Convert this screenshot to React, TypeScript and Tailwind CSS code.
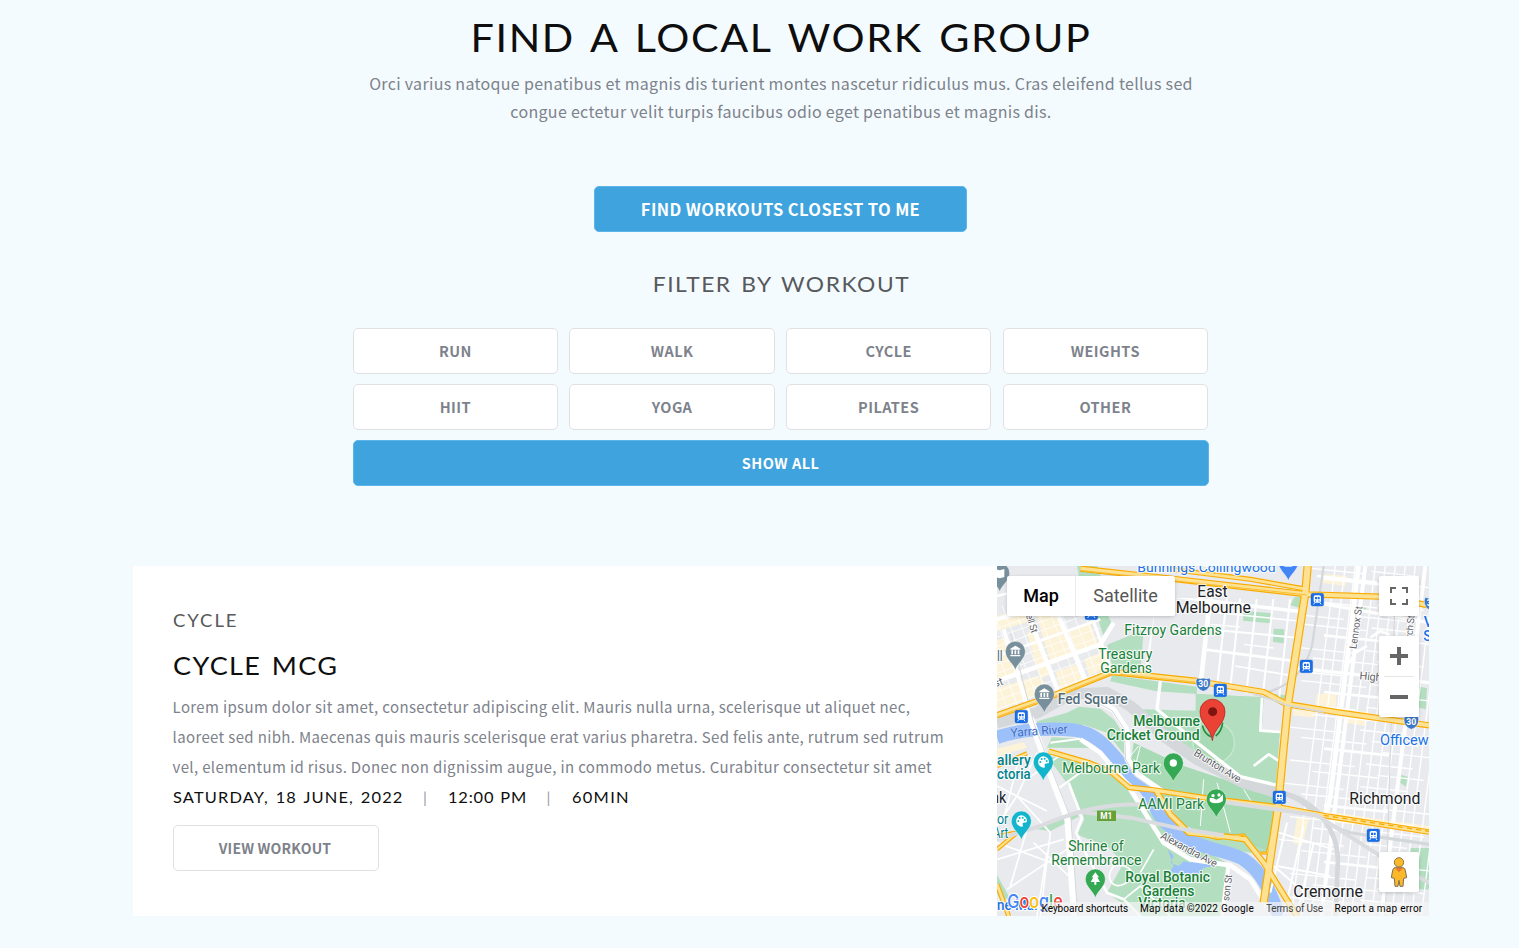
import React from "react";

const HEAD = "font-['Lato','Liberation_Sans',sans-serif] whitespace-nowrap";
const BODY = "font-['Noto_Sans_CJK_SC',sans-serif]";

type P = { d: string; w: number };

/* ---------- map data (units: thirds of a pixel) ---------- */
const parks = [
  "M240 0H300L312 32H246Z",
  "M300 150H334L348 180L320 212Z",
  "M330 236L440 192L430 322L350 318Z",
  "M345 328L600 362L600 384L478 376L340 346Z",
  "M120 466L210 440L246 422L310 428L352 462L382 510L386 590L408 620L470 672L834 722L836 668L772 640L560 540L430 430L596 434L600 384L800 394L794 494L848 500L820 862L770 862L620 840L520 700L440 640L330 500L260 476L120 490Z",
  "M596 384L800 394L794 494L848 500L836 664L740 640L620 590L500 520L420 440L596 450Z",
  "M800 380L868 388L862 420L830 402Z",
  "M164 514L252 518L300 546L150 545Z",
  "M150 570L300 590L380 650L440 720L520 800L690 890L670 1050H430L330 980L380 890L330 840L240 806L262 760L216 660Z",
  "M740 134L824 142L820 172L738 164Z",
  "M830 188L862 190L860 232L828 228Z",
  "M892 94L914 92L910 126L880 118Z",
  "M1266 362L1290 366L1286 430L1262 424Z",
  "M1092 122H1110L1106 136H1092Z",
  "M1210 626L1232 632L1226 662L1210 650Z",
  "M1240 846H1296V970H1240Z",
  "M0 926L40 1000H20L0 985Z",
  "M120 790L240 740L245 752L160 795Z",
];
const shops = [
  "M0 150L80 130L100 165L0 196Z",
  "M120 150H186L200 200L140 225Z",
  "M0 222L26 214L60 330L0 345Z",
  "M90 200L118 194L170 320L130 340Z",
  "M0 366L120 330L165 370L0 436Z",
  "M140 225L200 200L226 270L164 296Z",
  "M214 196L280 172L304 236L240 262Z",
  "M176 318L236 296L262 340L190 368Z",
  "M262 280L320 256L336 300L276 330Z",
  "M0 548L80 528L90 545L0 572Z",
  "M960 385L1020 380L1015 425L955 415Z",
  "M900 750L935 760L915 840L888 830Z",
  "M980 735L1296 780V800L975 765Z",
  "M985 25L1050 30L1045 60L975 50Z",
  "M890 425L960 430L950 455L888 448Z",
  "M1060 430L1120 440L1100 480L1050 470Z",
];

const eastV: P[] = [];
for (let i = 0; i < 18; i++) {
  const x = 975 + i * 30;
  eastV.push({ d: `M${x + 40} 0L${x - 92} 1050`, w: i % 6 === 3 ? 12 : 4 });
}
const eastH: P[] = [];
for (let i = 0; i < 33; i++) {
  const y = -30 + i * 34;
  const off = ((i * 67) % 5) * 34;
  eastH.push({ d: `M${845 + off} ${y}L${1040 + off} ${y + 20}`, w: i % 5 === 2 ? 8 : 4 });
  eastH.push({ d: `M${1090 + off / 2} ${y + 12}L${1230 + off / 2} ${y + 27}`, w: 4 });
}
const northV = [470, 545, 640, 690, 730, 780, 830, 880].map((x, i) => ({
  d: `M${x} 90L${x - 34} 400`,
  w: i === 2 ? 14 : i === 0 ? 16 : 6,
})).filter((_, i) => i !== 1);
const northH = [
  { d: "M535 92L920 138", w: 10 },
  { d: "M640 138L905 165", w: 5 },
  { d: "M630 190L900 215", w: 6 },
  { d: "M620 250L890 285", w: 8 },
  { d: "M715 300L890 330", w: 5 },
  { d: "M640 175L730 183", w: 4 },
  { d: "M740 235L830 246", w: 4 },
];
const cbdMinor: string[] = [];
for (let i = 0; i < 15; i++) cbdMinor.push(`M0 ${160 + i * 27}L340 ${40 + i * 27}`);
for (let i = 0; i < 14; i++) cbdMinor.push(`M${-120 + i * 34} 120L${5 + i * 34} 450`);

const whites: P[] = [
  { d: "M0 345L310 235L350 170", w: 14 },
  { d: "M0 270L310 160", w: 8 },
  { d: "M95 150L182 372", w: 14 },
  { d: "M185 150L266 345", w: 14 },
  { d: "M280 140L345 320", w: 9 },
  { d: "M20 190L102 460", w: 12 },
  { d: "M0 160L80 138", w: 12 },
  { d: "M100 455L140 570L212 760L232 1050", w: 20 },
  { d: "M0 660L150 735M0 780L60 690L120 560M60 690L160 800L130 1050M0 880L200 820M30 970L210 850M60 600L20 760M110 830L215 930M90 790L40 960M0 830L190 900M150 860L120 1050M200 560L90 640L0 620", w: 5 },
  { d: "M215 650L255 755L238 800L260 850L330 980L380 1000L430 1050", w: 8 },
  { d: "M180 670L250 620L300 602", w: 6 },
  { d: "M250 520L310 560L390 655L500 830L580 880L700 898L760 940L810 1020", w: 14 },
  { d: "M308 410L350 432L388 490L392 580L420 625L500 680", w: 18 },
  { d: "M160 530L250 518", w: 6 },
  { d: "M490 345L480 430L600 530L730 632L850 660", w: 10 },
  { d: "M425 540L400 570M430 540L410 620L450 640M620 640L610 780M660 650L700 800M740 670L765 710M410 580L440 610", w: 3 },
  { d: "M770 600L815 565L850 588L845 620M795 395L790 494L850 498", w: 8 },
  { d: "M350 900C320 940 350 970 380 955C430 930 400 890 350 900M430 920L470 850M380 1000L430 960L520 1050", w: 5 },
  { d: "M695 890L675 1050", w: 12 },
  { d: "M1085 0L1000 690L985 760", w: 14 },
  { d: "M960 110L1296 170", w: 10 },
  { d: "M890 305L1296 350", w: 10 },
  { d: "M830 900L900 960M845 800L1010 850M840 900L1000 930M870 770L820 980M920 780L860 1050M950 830L900 1050", w: 6 },
];
const rails: P[] = [
  { d: "M0 470L120 440L220 385L330 380L400 420L500 510L600 580L740 650L840 680", w: 34 },
  { d: "M230 378L330 370L420 420L560 540", w: 8 },
  { d: "M850 680C960 700 1030 800 1022 900L1015 1050", w: 14 },
  { d: "M840 678C940 700 970 780 1060 800L1296 835", w: 10 },
  { d: "M980 0L945 240C920 330 860 370 790 384", w: 7 },
];
const yellows: P[] = [
  { d: "M250 8L540 40L930 85L1150 92L1296 118", w: 18 },
  { d: "M520 10L760 40L930 70", w: 14 },
  { d: "M932 0L925 80L872 420L842 730L800 1010", w: 24 },
  { d: "M0 448L170 388L345 318L600 345L800 378L868 414L1030 440L1296 478", w: 18 },
  { d: "M155 556L280 592L345 620L396 664L470 672L640 698L840 722L1000 752L1296 798", w: 16 },
  { d: "M478 675L520 745L575 800L690 812L745 820L800 890L900 1050", w: 18 },
  { d: "M590 800L660 818L740 806L780 860L810 862L822 820", w: 8 },
  { d: "M0 600L90 562M0 810L60 800L0 850", w: 12 },
  { d: "M0 955L35 1050", w: 14 },
];

const Lines = ({ items, color, extra = 0 }: { items: P[]; color: string; extra?: number }) => (
  <g fill="none" stroke={color} strokeLinejoin="round">
    {items.map((p, i) => (
      <path key={i} d={p.d} strokeWidth={p.w + extra} />
    ))}
  </g>
);

const Station = ({ x, y }: { x: number; y: number }) => (
  <g transform={`translate(${x} ${y})`}>
    <rect x="-19" y="-19" width="38" height="38" rx="5" fill="#1a6fe8" stroke="#1558c0" />
    <rect x="-11" y="-13" width="22" height="22" rx="5" fill="#fff" />
    <path d="M-7 -8H-1V-1H-7ZM1 -8H7V-1H1Z" fill="#1a6fe8" />
    <circle cx="-5" cy="4" r="2" fill="#1a6fe8" />
    <circle cx="5" cy="4" r="2" fill="#1a6fe8" />
    <path d="M-8 9L-11 14M8 9L11 14" stroke="#fff" strokeWidth="3" />
  </g>
);

const Pin = ({ x, y, color, children }: { x: number; y: number; color: string; children?: React.ReactNode }) => (
  <g transform={`translate(${x} ${y})`}>
    <path
      d="M0 57C-4 38 -30 24 -30 0A30 30 0 0 1 30 0C30 24 4 38 0 57Z"
      fill={color}
      stroke="#fff"
      strokeOpacity=".6"
      strokeWidth="2"
    />
    {children}
  </g>
);

const Museum = () => (
  <path d="M-15 -8L0 -17L15 -8V-5H-15ZM-12 -3H-7V9H-12ZM-2.500 -3H2.500V9H-2.500ZM7 -3H12V9H7ZM-15 11H15V15H-15Z" fill="#fff" />
);
const Palette = ({ color }: { color: string }) => (
  <g>
    <path d="M0 -17A17 17 0 1 0 3 17C8 15 0 8 6 5C12 3 17 6 17 -1A17 16 0 0 0 0 -17Z" fill="#fff" />
    <circle cx="-9" cy="0" r="3" fill={color} />
    <circle cx="-5" cy="-9" r="3" fill={color} />
    <circle cx="4" cy="-10" r="3" fill={color} />
    <circle cx="10" cy="-3" r="3" fill={color} />
  </g>
);

const Shield = ({ x, y, label }: { x: number; y: number; label: string }) => (
  <g transform={`translate(${x} ${y})`}>
    <path d="M-19 -18Q-10 -13 0 -18Q10 -13 19 -18L22 -10Q24 14 0 22Q-24 14 -22 -10Z" fill="#3b78c9" stroke="#fff" strokeWidth="1.500" />
    <text x="0" y="9" textAnchor="middle" fontSize="26" fontWeight="700" fill="#fff">{label}</text>
  </g>
);

type L = { t: string; x: number; y: number; w: number; s?: number; c?: string; b?: number };
const green = "#188038";
const labels: L[] = [
  { t: "Bunnings Collingwood", x: 421, y: 19, w: 415, c: "#1a73e8", s: 40 },
  { t: "East", x: 601, y: 93, w: 91, c: "#202124", s: 47 },
  { t: "Melbourne", x: 536, y: 140, w: 226, c: "#202124", s: 47 },
  { t: "Fitzroy Gardens", x: 382, y: 207, w: 292 },
  { t: "Treasury", x: 304, y: 280, w: 162 },
  { t: "Gardens", x: 310, y: 321, w: 155 },
  { t: "Fed Square", x: 182, y: 414, w: 210, c: "#546e7a", b: 500 },
  { t: "Melbourne", x: 409, y: 480, w: 200, b: 500 },
  { t: "Cricket Ground", x: 329, y: 522, w: 279, b: 500 },
  { t: "Melbourne Park", x: 196, y: 621, w: 293 },
  { t: "AAMI Park", x: 424, y: 729, w: 197 },
  { t: "Shrine of", x: 214, y: 854, w: 166 },
  { t: "Remembrance", x: 163, y: 897, w: 270 },
  { t: "Royal Botanic", x: 385, y: 948, w: 254, b: 500 },
  { t: "Gardens", x: 436, y: 990, w: 156, b: 500 },
  { t: "Victoria", x: 424, y: 1027, w: 142, b: 500 },
  { t: "Richmond", x: 1057, y: 715, w: 213, c: "#202124", s: 47 },
  { t: "Cremorne", x: 889, y: 994, w: 209, c: "#202124", s: 47 },
  { t: "allery", x: 0, y: 598, w: 101, c: "#00838f", b: 500 },
  { t: "ctoria", x: 0, y: 639, w: 101, c: "#00838f", b: 500 },
  { t: "or", x: 0, y: 774, w: 34, c: "#00838f" },
  { t: "Art", x: -12, y: 816, w: 46, c: "#00838f" },
  { t: "nk", x: -18, y: 711, w: 46, c: "#202124", s: 47 },
  { t: "ll", x: 0, y: 285, w: 17, c: "#546e7a" },
  { t: "Officew", x: 1149, y: 537, w: 146, c: "#1a73e8" },
  { t: "V", x: 1280, y: 184, w: 28, c: "#1a73e8", b: 500 },
  { t: "S", x: 1279, y: 225, w: 25, c: "#1a73e8", b: 500 },
  { t: "ne Ma.", x: 0, y: 1032, w: 122, c: "#1a73e8", b: 500 },
];

const MapArt = () => (
  <svg viewBox="0 0 1296 1050" className="block h-[350px] w-[432px] font-['Roboto',sans-serif]">
    <defs>
      <clipPath id="east"><path d="M945 0H1296V1050H890L800 900L880 420Z" /></clipPath>
      <clipPath id="north"><path d="M480 95L922 100L875 400L478 345L440 330Z" /></clipPath>
      <clipPath id="cbd"><path d="M0 120H290L340 318L170 380L0 440Z" /></clipPath>
    </defs>
    <rect width="1296" height="1050" fill="#e8eaed" />
    {shops.map((d) => <path key={d} d={d} fill="#fdf3d8" />)}
    {parks.map((d) => <path key={d} d={d} fill="#b3dfc0" />)}
    <path d="M410 530L560 600L740 660L830 690L830 860L690 810L560 780L470 660L400 600Z" fill="#a8dab5" />
    <circle cx="650" cy="530" r="62" fill="#a8dab5" stroke="#c6ead0" strokeWidth="4" />
    <g clipPath="url(#cbd)" fill="none" stroke="#fff" strokeWidth="3" strokeOpacity=".8">
      {cbdMinor.map((d) => <path key={d} d={d} />)}
    </g>
    <g clipPath="url(#east)"><Lines items={[...eastV, ...eastH]} color="#fff" /></g>
    <g clipPath="url(#north)"><Lines items={[...northV, ...northH]} color="#fff" /></g>
    <path d="M1120 215L1150 195L1178 206M1050 300L1075 260L1110 240M300 30L350 150M960 30L1140 50M0 90L80 70" fill="none" stroke="#fff" strokeWidth="8" />
    <path d="M0 514C70 490 150 486 230 492C330 505 350 590 420 642C480 690 460 740 530 790C590 850 690 850 740 880C800 920 820 980 850 1060" fill="none" stroke="#9cc0f9" strokeWidth="40" />
    <path d="M512 850L530 870L520 890L545 900L560 885L580 890L600 870L640 880L650 900L620 905L600 930L570 920L545 928L520 915L530 900Z" fill="#9cc0f9" />
    <Lines items={rails} color="#d5d8db" />
    <Lines items={whites} color="#fff" />
    <path d="M40 200L110 470L150 575L222 760L242 1050M1195 60L1165 1050" fill="none" stroke="#d5d8db" strokeWidth="3" />
    <path d="M300 410L345 434L382 490L386 580L414 630L496 686" fill="none" stroke="#bdc1c6" strokeWidth="2" />
    <Lines items={yellows} color="#f9ab00" extra={1} />
    <Lines items={yellows} color="#fde293" extra={-6} />
    <path d="M250 13L540 45L930 87M0 452L170 392L345 322L600 349" fill="none" stroke="#f9ab00" strokeWidth="2" />
    <path d="M980 748L1296 796" stroke="#f9ab00" strokeWidth="4" strokeDasharray="16 12" />
    <path d="M0 820L130 780C250 730 330 712 450 715M250 738L400 755L560 790L680 808M660 705L960 748L1150 870L1296 950" fill="none" stroke="#dadce0" strokeWidth="12" />
    <path d="M770 384L830 402L870 418L980 438" stroke="#d8d8d4" strokeWidth="6" fill="none" />

    <Station x={283} y={142} />
    <Station x={73} y={452} />
    <Station x={961} y={101} />
    <Station x={928} y={301} />
    <Station x={670} y={373} />
    <Station x={847} y={694} />
    <Station x={1129} y={808} />
    <Shield x={619} y={354} label="30" />
    <Shield x={1243} y={468} label="30" />
    <Shield x={1304} y={112} label="30" />
    <rect x="300" y="734" width="57" height="31" fill="#689f38" />
    <text x="328" y="759" textAnchor="middle" fontSize="25" fontWeight="700" fill="#fff">M1</text>

    <g fontSize="33" fill="#5f6368" stroke="#fff" strokeWidth="5" strokeLinejoin="round" className="[paint-order:stroke]">
      <text transform="translate(41 513) rotate(-4)" fontSize="36" fill="#3f6ec6" strokeOpacity=".2" textLength="172" lengthAdjust="spacingAndGlyphs">Yarra River</text>
      <text transform="translate(588 566) rotate(32)" textLength="160" fontSize="32">Brunton Ave</text>
      <text transform="translate(488 816) rotate(28)" textLength="188" fontSize="32">Alexandra Ave</text>
      <text transform="translate(1078 250) rotate(-82)" textLength="130" fontSize="30">Lennox St</text>
      <text transform="translate(1246 216) rotate(-84)" textLength="68" fontSize="30">rch St</text>
      <text transform="translate(86 148) rotate(72)" textLength="58" fontSize="30">ell St</text>
      <text transform="translate(696 1006) rotate(-83)" textLength="80" fontSize="30">son St</text>
      <text x="1087" y="340" textLength="66" transform="rotate(5 1087 340)">High</text>
      <text x="-6" y="362" transform="rotate(-20 0 362)">st</text>
    </g>

    <path d="M616 478Q622 504 642 512M656 510Q674 496 677 470" fill="none" stroke="#1e8e3e" strokeWidth="5" />
    <g strokeLinejoin="round" className="[paint-order:stroke]">
      {labels.map((l, i) => (
        <text
          key={i}
          x={l.x}
          y={l.y}
          textLength={l.w}
          lengthAdjust="spacingAndGlyphs"
          fontSize={l.s ?? 42}
          fontWeight={l.b ?? 400}
          fill={l.c ?? green}
          stroke="#fff"
          strokeWidth="7"
          strokeOpacity=".75"
        >
          {l.t}
        </text>
      ))}
    </g>
    <Pin x={55} y={256} color="#78909c"><Museum /></Pin>
    <Pin x={142} y={384} color="#78909c"><Museum /></Pin>
    <Pin x={8} y={21} color="#78909c"><path d="M-14 -12L0 -8L14 -12V12L0 16L-14 12Z" fill="#fff" /></Pin>
    <Pin x={139} y={588} color="#12b5cb"><Palette color="#12b5cb" /></Pin>
    <Pin x={73} y={765} color="#12b5cb"><Palette color="#12b5cb" /></Pin>
    <Pin x={529} y={591} color="#34a853"><circle r="11" fill="#fff" /></Pin>
    <Pin x={658} y={699} color="#34a853">
      <path d="M-20 -4L-8 -2L0 2L10 -4L20 -14V6Q10 14 0 12Q-16 14 -20 6Z" fill="#fff" />
      <circle cx="-10" cy="-10" r="5" fill="#fff" /><circle cx="8" cy="-12" r="5" fill="#fff" />
    </Pin>
    <Pin x={295} y={939} color="#34a853"><path d="M0 -20L11 -5H6L14 9H3V17H-3V9H-14L-6 -5H-11Z" fill="#fff" /></Pin>
    <Pin x={874} y={-12} color="#4285f4"><path d="M-12 -4H12V14H-12Z" fill="#fff" /></Pin>

    <path d="M646 524C642 486 609 474 609 437A37.500 37.500 0 0 1 684 437C684 474 651 486 646 524Z" fill="#ea4335" stroke="#b31412" strokeWidth="2" />
    <circle cx="647" cy="437" r="13.500" fill="#811411" />

    <text x="31" y="1026" fontSize="57" fontWeight="500" textLength="166" lengthAdjust="spacingAndGlyphs" stroke="#fff" strokeWidth="6" className="font-['Inter',sans-serif] [paint-order:stroke]">
      <tspan fill="#4285f4">G</tspan><tspan fill="#ea4335">o</tspan><tspan fill="#fbbc04">o</tspan><tspan fill="#4285f4">g</tspan><tspan fill="#34a853">l</tspan><tspan fill="#ea4335">e</tspan>
    </text>
  </svg>
);

const control = "absolute flex items-center justify-center rounded-[2px] bg-white shadow-[0_1px_4px_-1px_rgba(0,0,0,0.3)]";

const MapPanel = () => (
  <div className="relative h-[350px] w-[432px] overflow-hidden font-['Roboto',sans-serif]">
    <MapArt />
    <div className={`${control} left-[10px] top-[10px] h-10 text-[18px]`}>
      <span className="mt-[-2px] w-[68px] text-center font-medium text-black">Map</span>
      <span className="flex h-10 w-[100px] items-center justify-center border-l border-[#ececec] pb-[2px] text-[#565656]">Satellite</span>
    </div>
    <div className={`${control} left-[382px] top-[10px] size-10`}>
      <svg viewBox="0 0 18 18" className="size-[18px]" fill="#666"><path d="M0 0v6h2V2h4V0H0zm16 0h-4v2h4v4h2V0h-2zm0 16h-4v2h6v-6h-2v4zM2 12H0v6h6v-2H2v-4z" /></svg>
    </div>
    <div className={`${control} left-[382px] top-[70px] h-[81px] w-10 flex-col`}>
      <svg viewBox="0 0 18 18" className="my-[11px] size-[18px]" fill="#666"><path d="M18 7h-7V0H7v7H0v4h7v7h4v-7h7z" /></svg>
      <span className="h-px w-[30px] bg-[#e6e6e6]" />
      <svg viewBox="0 0 18 18" className="my-[11px] size-[18px]" fill="#666"><path d="M0 7h18v4H0z" /></svg>
    </div>
    <div className={`${control} left-[382px] top-[286px] size-10`}>
      <svg viewBox="0 0 54 90" className="mr-px h-[30px] w-[18px]">
        <path d="M16 31H38Q46 33 47 45L50 62L41 64L39 88H30L27 70L24 88H15L13 64L4 62L7 45Q8 33 16 31Z" fill="#fbb829" stroke="#7d6f55" strokeWidth="3" />
        <circle cx="27" cy="16" r="14" fill="#fbb829" stroke="#8d784a" strokeWidth="3" />
        <path d="M14 32L27 46L40 32Z" fill="#e57b30" />
      </svg>
    </div>
    <div className="absolute bottom-0 right-0 flex h-[14px] items-center whitespace-nowrap bg-[#f5f5f5]/70 text-[10px] leading-[14px] text-black">
      <span className="w-[98.5px]">Keyboard shortcuts</span>
      <span className="w-[126px] tracking-[0.24px]">Map data ©2022 Google</span>
      <span className="w-[68.5px] tracking-[-0.2px] text-[#444]">Terms of Use</span>
      <span className="w-[94.5px] tracking-[0.25px]">Report a map error</span>
    </div>
  </div>
);

const filters = ["RUN", "WALK", "CYCLE", "WEIGHTS", "HIIT", "YOGA", "PILATES", "OTHER"];

export default function App() {
  return (
    <div className={`min-h-[948px] bg-[#f4fbff] pl-[43px] ${BODY}`}>
      <header className="flex flex-col items-center pt-[9px]">
        <h1 className={`h-[56px] scale-x-[1.06] text-[39px] leading-[56px] tracking-[1.55px] text-[#0e0e0e] [word-spacing:4px] ${HEAD}`}>FIND A LOCAL WORK GROUP</h1>
        <p className="mt-[4px] text-center text-[16px] leading-[28px] tracking-[0.31px] text-[#7d828b]">
          Orci varius natoque penatibus et magnis dis turient montes nascetur ridiculus mus. Cras eleifend tellus sed<br />
          congue ectetur velit turpis faucibus odio eget penatibus et magnis dis.
        </p>
        <button className="mr-px mt-[61px] h-[46px] w-[373px] rounded-[5px] border border-[#5bb5ea] bg-[#3fa3de] text-[16.5px] font-bold tracking-[0.38px] text-white">FIND WORKOUTS CLOSEST TO ME</button>
        <h2 className={`mt-[36px] h-[32px] scale-x-[1.06] text-[21.5px] leading-[32px] tracking-[1.45px] text-[#58595b] [word-spacing:2px] ${HEAD}`}>FILTER BY WORKOUT</h2>
      </header>
      <div className="ml-[309.6px] mt-[28px] grid w-[856px] grid-cols-[repeat(4,205.6px)] gap-x-[11.05px] gap-y-[10px]">
        {filters.map((f) => (
          <button key={f} className="h-[46px] rounded-[5px] border border-[#dfe1e3] bg-white text-[14.5px] font-bold tracking-[0.45px] text-[#7d828b]">{f}</button>
        ))}
        <button className="col-span-4 h-[46px] w-[856px] rounded-[5px] border border-[#5bb5ea] bg-[#3fa3de] text-[14.5px] font-bold tracking-[0.5px] text-white">SHOW ALL</button>
      </div>
      <article className="mx-auto mt-[80px] flex h-[350px] w-[1296px] bg-white">
        <div className="flex w-[864px] flex-col items-start px-[40px] pt-[41px]">
          <h4 className={`h-[28px] origin-left scale-x-[1.06] text-[17.5px] leading-[28px] tracking-[1.8px] text-[#58595b] ${HEAD}`}>CYCLE</h4>
          <h3 className={`mt-[10px] h-[40px] origin-left scale-x-[1.06] text-[25.5px] leading-[40px] tracking-[1.3px] text-[#0e0e0e] [word-spacing:2px] ${HEAD}`}>CYCLE MCG</h3>
          <p className="-ml-[0.4px] mt-[7px] whitespace-nowrap text-[15px] leading-[30px] tracking-[0.35px] text-[#7d828b]">
            Lorem ipsum dolor sit amet, consectetur adipiscing elit. Mauris nulla urna, scelerisque ut aliquet nec,<br />
            laoreet sed nibh. Maecenas quis mauris scelerisque erat varius pharetra. Sed felis ante, rutrum sed rutrum<br />
            vel, elementum id risus. Donec non dignissim augue, in commodo metus. Curabitur consectetur sit amet
          </p>
          <div className={`mt-px flex h-[30px] items-center text-[15.5px] text-[#0e0e0e] ${HEAD}`}>
            <span className="w-[250px] origin-left scale-x-[1.06] tracking-[1.07px] [word-spacing:1.5px]">SATURDAY, 18 JUNE, 2022</span>
            <span className="w-[24.5px] text-[#9a9da3]">|</span>
            <span className="w-[99px] origin-left scale-x-[1.06] tracking-[0.75px] [word-spacing:1px]">12:00 PM</span>
            <span className="w-[25px] text-[#9a9da3]">|</span>
            <span className="origin-left scale-x-[1.06] tracking-[1.2px]">60MIN</span>
          </div>
          <button className="mt-[12px] h-[46px] w-[206px] rounded-[5px] border border-[#dfe1e3] pr-[2px] text-[14px] font-bold tracking-[0.2px] text-[#7d828b]">VIEW WORKOUT</button>
        </div>
        <MapPanel />
      </article>
    </div>
  );
}
